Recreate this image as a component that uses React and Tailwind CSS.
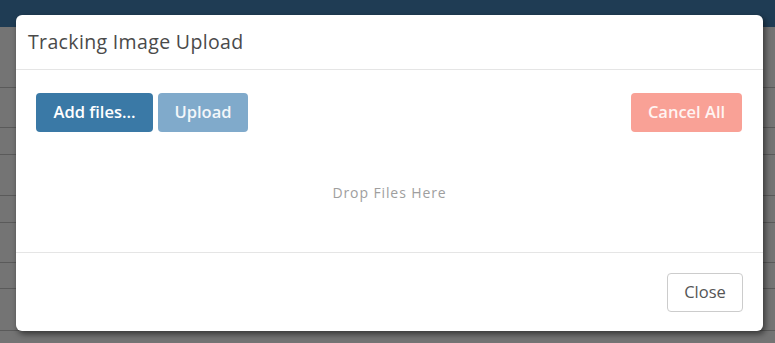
import React from 'react';

const rows = [87, 127, 154, 195, 222, 262, 288, 330];

export default function App() {
  return (
    <div className="relative w-[775px] h-[343px] overflow-hidden bg-[#747474]" style={{ fontFamily: '"Open Sans", sans-serif' }}>
      {/* page behind the overlay */}
      <div className="h-[27px] bg-[#1f3c54]" />
      {rows.map((y) => (
        <div key={y} className="absolute left-0 right-0 h-px bg-[#5a5a5a]" style={{ top: y }} />
      ))}

      {/* modal */}
      <div className="absolute left-[16px] top-[15px] w-[747px] h-[316px] bg-white rounded-[6px] flex flex-col shadow-[2px_3px_6px_rgba(0,0,0,0.55)]">
        <div className="h-[55px] px-[12px] flex items-center border-b border-[#e5e5e5]">
          <h4 className="text-[19.5px] text-[#4a4a4a] leading-none tracking-[0.35px]">Tracking Image Upload</h4>
        </div>

        <div className="flex-1 px-[20px] pt-[23px] border-b border-[#e5e5e5] flex flex-col">
          <div className="flex items-center justify-between">
            <div className="flex gap-[5px]">
              <button className="h-[39px] w-[117px] rounded-[4px] bg-[#3a79a6] text-white text-[16.5px] font-semibold">Add files...</button>
              <button className="h-[39px] w-[90px] rounded-[4px] bg-[#80aacb] text-[#f3f7fa] text-[16.5px] font-semibold">Upload</button>
            </div>
            <button className="h-[39px] w-[111px] mr-px rounded-[4px] bg-[#f9a196] text-[#fff4f2] text-[16.5px] font-semibold">Cancel All</button>
          </div>
          <div className="flex-1 flex items-center justify-center">
            <span className="text-[14px] text-[#9e9e9e] tracking-[0.9px]">Drop Files Here</span>
          </div>
        </div>

        <div className="h-[78px] px-[20px] flex items-center justify-end">
          <button className="h-[39px] w-[76px] rounded-[4px] border border-[#cccccc] bg-white text-[16.5px] text-[#555]">Close</button>
        </div>
      </div>
    </div>
  );
}
